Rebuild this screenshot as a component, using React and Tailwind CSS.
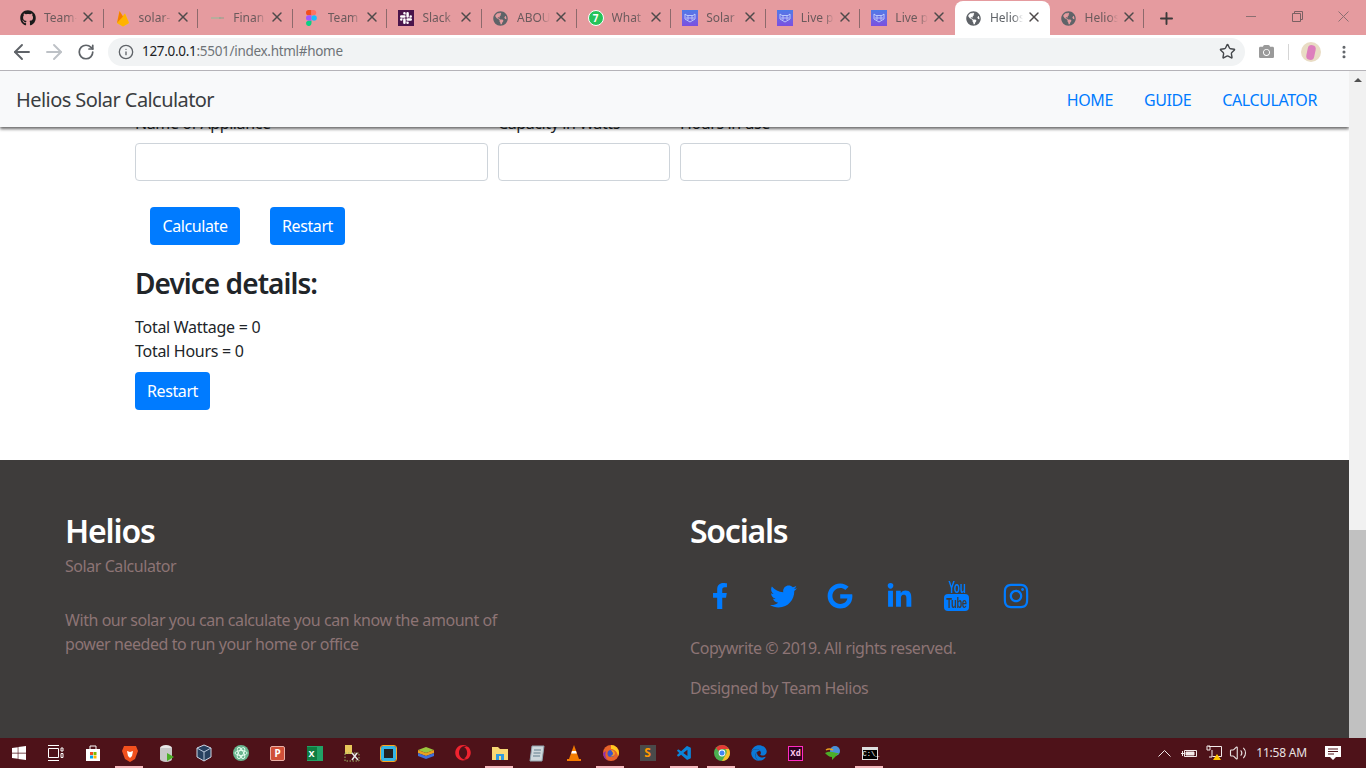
import React from "react";
import { FaGithub, FaGlobeAmericas, FaFacebookF, FaTwitter, FaGoogle, FaLinkedinIn, FaInstagram, FaWindows, FaCamera, FaEdge, FaOpera } from "react-icons/fa";
import { SiSlack } from "react-icons/si";
import { VscVscode } from "react-icons/vsc";
import { X, Plus, ArrowLeft, ArrowRight, RotateCw, Info, Star, Volume2, MoreVertical } from "lucide-react";

const font = "font-['Noto_Sans','Open_Sans',sans-serif]";

function Cat() {
  return (
    <span className="w-4 h-4 bg-gradient-to-b from-[#4d7be8] to-[#7a4fe0] flex items-center justify-center">
      <svg width="12" height="10" viewBox="0 0 12 10" fill="none" stroke="#cfe0ff" strokeWidth="0.8">
        <path d="M1 1l2 1.500h6L11 1v5L6 9 1 6z" />
        <circle cx="4" cy="5" r="1.200" />
        <circle cx="8" cy="5" r="1.200" />
      </svg>
    </span>
  );
}

function Fire() {
  return (
    <svg width="14" height="17" viewBox="0 0 14 17">
      <path d="M1 13L3.500 1 7 6.500 9 3.500 13 13 7 16.500z" fill="#ffca28" />
      <path d="M1 13L9 3.500 13 13 7 16.500z" fill="#ffb300" />
      <path d="M1 13L3.500 1 7 6.500z" fill="#f57c00" />
    </svg>
  );
}

function FigmaIcon() {
  return (
    <svg width="11" height="16" viewBox="0 0 11 16">
      <path d="M0 2.700A2.700 2.700 0 012.700 0h2.800v5.300H2.700A2.700 2.700 0 010 2.700z" fill="#f24e1e" />
      <path d="M5.500 0h2.600a2.700 2.700 0 010 5.300H5.500z" fill="#ff7262" />
      <path d="M0 8a2.700 2.700 0 012.700-2.700h2.800v5.400H2.700A2.700 2.700 0 010 8z" fill="#a259ff" />
      <circle cx="8.100" cy="8" r="2.700" fill="#1abcfe" />
      <path d="M0 13.300a2.700 2.700 0 012.700-2.600h2.800v2.600a2.700 2.700 0 01-5.500 0z" fill="#0acf83" />
    </svg>
  );
}

function SlackIcon() {
  return (
    <span className="w-4 h-4 bg-[#4a154b] flex items-center justify-center">
      <SiSlack className="text-white" size={12} />
    </span>
  );
}

function Finance() {
  return (
    <svg width="16" height="16" viewBox="0 0 16 16">
      <rect x="2" y="7" width="10" height="2" fill="#b8ad9c" />
      <rect x="10" y="7.500" width="5" height="1" fill="#8fa08c" />
    </svg>
  );
}

function Wa() {
  return (
    <span className="relative w-4 h-4 rounded-full bg-[#25c35a] border border-white flex items-center justify-center text-[10px] leading-none font-bold text-white">
      7
    </span>
  );
}

const globe = <FaGlobeAmericas className="text-[#5f6368]" size={15} />;

const tabs = [
  { icon: <FaGithub className="text-[#1a1a1a]" size={16} />, t: "Team-" },
  { icon: <Fire />, t: "solar-" },
  { icon: <Finance />, t: "Finan" },
  { icon: <FigmaIcon />, t: "Team" },
  { icon: <SlackIcon />, t: "Slack" },
  { icon: globe, t: "ABOU" },
  { icon: <Wa />, t: "What" },
  { icon: <Cat />, t: "Solar" },
  { icon: <Cat />, t: "Live p" },
  { icon: <Cat />, t: "Live p" },
  { icon: globe, t: "Helios", active: true },
  { icon: globe, t: "Helios" },
];

function Tab({ icon, t, active, noSep }) {
  return (
    <div className={`relative w-[94.6px] h-[34px] shrink-0 flex items-center pl-[11px] ${active ? "bg-white rounded-t-[8px] text-[#5f6368]" : "text-[#6b5a5c]"}`}>
      <span className="w-4 h-4 flex items-center justify-center shrink-0">{icon}</span>
      <span className="ml-2 w-[33px] overflow-hidden whitespace-nowrap text-[12px] leading-none [mask-image:linear-gradient(90deg,#000_70%,transparent)]">{t}</span>
      <X size={16} strokeWidth={2.2} className="absolute left-[71px] top-[8px] text-[#4f4a4b]" />
      {!noSep && <span className="absolute right-0 top-[8px] w-px h-[19px] bg-[#8d6a6c]" />}
    </div>
  );
}

function TabStrip() {
  return (
    <div className="h-[35px] bg-[#e59b9f] flex items-end pl-[9px] shrink-0">
      <div className="flex h-[34px]">
        {tabs.map((tb, i) => (
          <Tab key={i} {...tb} noSep={tb.active || i === 9} />
        ))}
      </div>
      <div className="h-[34px] w-[44px] flex items-center justify-center">
        <Plus size={19} strokeWidth={2.4} className="text-[#3c3a3b]" />
      </div>
      <div className="ml-auto flex h-[34px] items-start text-[#8b6f71]">
        <div className="w-[46px] h-[30px] flex items-center justify-center"><span className="w-[10px] h-px bg-[#8b6f71]" /></div>
        <div className="w-[46px] h-[30px] flex items-center justify-center">
          <svg width="11" height="11" viewBox="0 0 11 11" fill="none" stroke="#7a6062"><path d="M.5 2.500h8v8h-8zM2.500 2.500v-2h8v8h-2" /></svg>
        </div>
        <div className="w-[46px] h-[30px] flex items-center justify-center">
          <svg width="11" height="11" viewBox="0 0 11 11" stroke="#8b6f71"><path d="M.5.5l10 10M10.500.5l-10 10" /></svg>
        </div>
      </div>
    </div>
  );
}

function Toolbar() {
  return (
    <div className="h-[36px] bg-white border-b border-[#b5b3b8] flex items-center shrink-0 pb-[2px]">
      <div className="w-[108px] flex items-center shrink-0 pl-[10px] gap-[8px]">
        <ArrowLeft size={24} strokeWidth={1.9} className="text-[#5f6368]" />
        <ArrowRight size={24} strokeWidth={1.9} className="text-[#bdc1c6]" />
        <span className="w-6 flex justify-center"><RotateCw size={18} strokeWidth={2.3} className="text-[#5f6368]" /></span>
      </div>
      <div className="w-[1137px] h-[28px] rounded-full bg-[#f1f3f4] flex items-center pl-[10px] pr-[9px] shrink-0">
        <Info size={16} strokeWidth={2} className="text-[#5f6368] shrink-0" />
        <span className="ml-[8px] text-[13.5px] text-[#6f7378] tracking-[-0.3px]"><span className="text-[#202124]">127.0.0.1</span>:5501/index.html#home</span>
        <Star size={17} strokeWidth={2} className="ml-auto text-[#45484c]" />
      </div>
      <FaCamera size={15} className="text-[#9a9a9a] ml-[14px]" />
      <span className="w-px h-[16px] bg-[#d5d5d5] ml-[14px]" />
      <span className="relative ml-[12px] w-5 h-5 rounded-full bg-[#e9dcc4] overflow-hidden">
        <span className="absolute left-[6px] top-[3px] w-[8px] h-[15px] rounded-[4px] bg-[#dd7fbd] rotate-12" />
      </span>
      <MoreVertical size={16} strokeWidth={2.6} className="ml-[15px] text-[#5f6368]" />
    </div>
  );
}

function Nav() {
  return (
    <nav className="relative z-10 h-[56px] pt-[2px] bg-[#f8f9fa] shadow-[0_2px_3px_rgba(0,0,0,0.6)] flex items-center justify-between pl-4 pr-[32px] shrink-0">
      <span className="text-[20px] text-[#3a3d41] tracking-[-0.57px]">Helios Solar Calculator</span>
      <div className="flex gap-[31px] text-[16px] text-[#007bff] tracking-[-0.4px]">
        <span>HOME</span>
        <span>GUIDE</span>
        <span>CALCULATOR</span>
      </div>
    </nav>
  );
}

function Field({ label, w }) {
  return (
    <div className={`flex flex-col ${w}`}>
      <label className="h-6 mb-2 text-[16px] leading-6 text-[#212529] tracking-[-0.4px] whitespace-nowrap">{label}</label>
      <input className="h-[38px] w-full border border-[#ced4da] rounded bg-white" />
    </div>
  );
}

function Btn({ children, w }) {
  return <button className={`h-[38px] ${w} rounded bg-[#007bff] text-white text-[16px] tracking-[-0.4px] flex items-center justify-center`}>{children}</button>;
}

function Main() {
  return (
    <main className="bg-white pl-[135px] -mt-[16px] h-[349px] shrink-0">
      <div className="flex gap-[10px]">
        <Field label="Name of Appliance" w="w-[353px]" />
        <Field label="Capacity in Watts" w="w-[172px]" />
        <Field label="Hours in use" w="w-[171px]" />
      </div>
      <div className="flex gap-[30px] pl-[15px] mt-[26px]">
        <Btn w="w-[90px]">Calculate</Btn>
        <Btn w="w-[75px]">Restart</Btn>
      </div>
      <h3 className="mt-[19px] text-[28px] leading-[38px] font-semibold text-[#212529] tracking-[-0.95px]">Device details:</h3>
      <div className="mt-[13px] text-[16px] leading-6 text-[#212529] tracking-[-0.28px]">
        <p>Total Wattage = 0</p>
        <p>Total Hours = 0</p>
      </div>
      <div className="mt-[9px]"><Btn w="w-[75px]">Restart</Btn></div>
    </main>
  );
}

function YouTubeStack() {
  return (
    <span className="w-[25px] h-[30px] flex flex-col items-center text-[#007bff] font-['Liberation_Sans',sans-serif]">
      <span className="h-[13px] text-[16px] leading-[13px] font-bold scale-x-[0.62] whitespace-nowrap">You</span>
      <span className="w-[25px] h-[17px] rounded-[4px] bg-[#007bff] text-[#3e3c3b] flex items-center justify-center overflow-hidden">
        <span className="text-[15px] leading-[17px] font-bold scale-x-[0.62] whitespace-nowrap">Tube</span>
      </span>
    </span>
  );
}

function Footer() {
  const muted = "text-[#8d7475]";
  return (
    <footer className="h-[279px] bg-[#3e3c3b] flex shrink-0 tracking-[-0.44px]">
      <div className="w-[625px] pl-[65px] pt-[50px]">
        <h2 className="text-[32px] leading-[42px] font-semibold text-white tracking-[-1.15px]">Helios</h2>
        <p className={`mt-[2px] text-[16px] leading-6 ${muted}`}>Solar Calculator</p>
        <p className={`mt-[30px] w-[450px] text-[16px] leading-6 ${muted}`}>With our solar you can calculate you can know the amount of power needed to run your home or office</p>
      </div>
      <div className="pl-[65px] pt-[50px]">
        <h2 className="text-[32px] leading-[42px] font-semibold text-white tracking-[-1.25px]">Socials</h2>
        <div className="mt-[29px] h-[30px] flex items-center text-[#007bff]">
          <span className="w-[80px] pl-[17px]"><FaFacebookF size={26} /></span>
          <span className="w-[57px]"><FaTwitter size={27} /></span>
          <span className="w-[59px]"><FaGoogle size={26} /></span>
          <span className="w-[58px]"><FaLinkedinIn size={27} /></span>
          <span className="w-[58px]"><YouTubeStack /></span>
          <span><FaInstagram size={28} /></span>
        </div>
        <p className={`mt-[25px] text-[16px] leading-6 ${muted}`}>Copywrite © 2019. All rights reserved.</p>
        <p className={`mt-4 text-[16px] leading-6 ${muted}`}>Designed by Team Helios</p>
      </div>
    </footer>
  );
}

function Scrollbar() {
  return (
    <div className="w-[17px] bg-[#f1f1f1] flex flex-col shrink-0">
      <div className="h-[17px] flex items-center justify-center">
        <span className="w-0 h-0 border-x-[4px] border-x-transparent border-b-[4px] border-b-[#505050]" />
      </div>
      <div className="flex-1" />
      <div className="h-[208px] bg-[#c1c1c1]" />
    </div>
  );
}

const T = ({ children }) => <svg width="20" height="20" viewBox="0 0 20 20">{children}</svg>;

const chrome = (
  <svg width="16" height="16" viewBox="0 0 16 16">
    <circle cx="8" cy="8" r="8" fill="#4caf50" />
    <path d="M8 0a8 8 0 016.900 4H8a4 4 0 00-3.500 2L2 2.800A8 8 0 018 0z" fill="#e53935" />
    <path d="M14.900 4A8 8 0 018 16l3.500-6a4 4 0 00-.2-6z" fill="#fbc02d" />
    <circle cx="8" cy="8" r="3.400" fill="#fff" />
    <circle cx="8" cy="8" r="2.500" fill="#4285f4" />
  </svg>
);

const firefox = (
  <svg width="16" height="16" viewBox="0 0 16 16">
    <circle cx="8" cy="8" r="8" fill="#e8622a" />
    <path d="M8 0a8 8 0 018 8c0 2-1 3-1 3-1-5-4-7-7-7z" fill="#ffc81f" />
    <path d="M0 8a8 8 0 005 7.400C2 13 2 9 3 6z" fill="#8f2fa8" />
    <circle cx="8" cy="8.500" r="3.500" fill="#3a55c8" />
    <path d="M8 5c3 0 4 2 4 4-1 2-3 3-5 2 2 0 3-1 3-3z" fill="#ff9a1f" />
  </svg>
);

const taskIcons = [
  { i: <FaWindows size={16} className="text-white" /> },
  { i: <svg width="17" height="16" viewBox="0 0 17 16" fill="none" stroke="#fff"><path d="M1.500 3.500h10v9h-10zM1 .5h11M1 15.500h11M14 3h2v3h-2zM14 8.500h2v4h-2z" /></svg> },
  { i: <T><path d="M3 6h14v12H3z" fill="#fff" /><path d="M7 6V3h6v3" fill="none" stroke="#fff" /><path d="M7 9h3v3H7z" fill="#f25022" /><path d="M10.500 9h3v3h-3z" fill="#7fba00" /><path d="M7 12.500h3v3H7z" fill="#00a4ef" /><path d="M10.500 12.500h3v3h-3z" fill="#ffb900" /></T> },
  { i: <T><path d="M4 3h12l2 5-3 8-5 3-5-3-3-8z" fill="#f1501e" /><path d="M7 8l3 1 3-1-1 5-2 2-2-2z" fill="#fff" /></T>, on: true },
  { i: <T><ellipse cx="9" cy="5" rx="6" ry="3" fill="#e8e8e8" /><path d="M3 5h12v11a6 3 0 01-12 0z" fill="#c8c8c8" /><path d="M10 10l7 4-7 4z" fill="#4caf28" /></T> },
  { i: <T><path d="M10 2l7 3v9l-7 4-7-4V5z" fill="#27405f" stroke="#cfd8e6" /><path d="M3 5l7 4 7-4M10 9v9" stroke="#b8c6da" fill="none" /></T> },
  { i: <T><circle cx="10" cy="10" r="8" fill="#68b58e" /><g fill="none" stroke="#e8fff2" strokeWidth="0.9"><ellipse cx="10" cy="10" rx="6" ry="2.500" /><ellipse cx="10" cy="10" rx="6" ry="2.500" transform="rotate(60 10 10)" /><ellipse cx="10" cy="10" rx="6" ry="2.500" transform="rotate(120 10 10)" /></g></T> },
  { i: <span className="w-[15px] h-[15px] rounded-[2px] bg-[#d04f38] border border-[#e8b0a6] flex items-center justify-center text-[10px] font-bold text-white leading-none">P</span> },
  { i: <span className="relative w-[16px] h-[15px] bg-[#21a366]"><span className="absolute left-0 top-[1px] w-[10px] h-[13px] bg-[#107c41] flex items-center justify-center text-[9px] font-bold text-white leading-none">X</span></span> },
  { i: <T><rect x="3" y="2" width="7" height="9" fill="#e8c85a" /><rect x="3" y="10" width="14" height="8" fill="none" stroke="#9fb86a" strokeDasharray="1.500 1.500" /><path d="M10 10l6 7M15 10l-5 7" stroke="#e8e8e8" strokeWidth="1.500" /></T> },
  { i: <span className="w-[15px] h-[15px] border-[3px] border-[#33b5e5] rounded-[2px] bg-[#222] outline-1 outline-[#f6a623]" /> },
  { i: <T><path d="M10 4l8 3-8 3-8-3z" fill="#9bc53d" /><path d="M2 7v3l8 3 8-3V7l-8 3z" fill="#e8a020" /><path d="M2 10v3l8 3 8-3v-3l-8 3z" fill="#3f6fd8" /></T> },
  { i: <FaOpera size={16} className="text-[#f0232f]" /> },
  { i: <T><path d="M2 4h6l2 2h8v11H2z" fill="#f8d775" /><path d="M6 11h8v6H6z" fill="#2f9ae0" /><path d="M9 13h2v4H9z" fill="#f8d775" /></T>, on: true },
  { i: <T><path d="M5 3h12l-2 15H3z" fill="#cfd8dc" stroke="#90a4ae" /><path d="M7 7h7M6.500 10h7M6 13h7" stroke="#607d8b" /></T> },
  { i: <T><path d="M10 2l5 14H5z" fill="#f57c00" /><path d="M8 8h4l.8 2.500H7.200z" fill="#fff" /><rect x="3" y="16" width="14" height="2" fill="#f57c00" /></T> },
  { i: firefox, on: true },
  { i: <span className="w-4 h-4 bg-[#4a4a4a] flex items-center justify-center text-[#ff9800] text-[12px] font-bold leading-none">S</span> },
  { i: <VscVscode size={17} className="text-[#0a84d8]" />, on: true },
  { i: chrome, on: true },
  { i: <FaEdge size={16} className="text-[#0b78d7]" /> },
  { i: <span className="w-[15px] h-[15px] bg-[#2e001f] border border-[#ff2bc2] flex items-center justify-center text-[8px] font-bold text-[#ffc6ee] leading-none">Xd</span> },
  { i: <T><circle cx="12" cy="8" r="5" fill="#4a90d9" /><path d="M2 10c5-3 10 0 14 0l-7 7v-3c-3 0-5-2-7-4z" fill="#4caf28" /><path d="M3 7c3-2 5-1 7 0" stroke="#e8a020" fill="none" strokeWidth="1.500" /></T> },
  { i: <span className="w-4 h-[13px] bg-black border border-[#ddd] border-t-[3px] text-[7px] leading-[8px] text-white font-['Liberation_Mono',monospace]">C:\_</span>, on: true },
];

function Taskbar() {
  return (
    <div className="h-[30px] bg-[#4e1219] flex items-center shrink-0">
      {taskIcons.map((k, n) => (
        <div key={n} className="relative w-[37px] h-[30px] flex items-center justify-center shrink-0">
          {k.i}
          {k.on && <span className="absolute bottom-0 left-[4px] right-[5px] h-[2px] bg-[#f4b8bc]" />}
        </div>
      ))}
      <div className="ml-auto flex items-center text-[#e9e2e2] h-[30px]">
        <svg width="13" height="8" viewBox="0 0 13 8" fill="none" stroke="#f2eaea" className="mr-[10px]"><path d="M.5 7.500l6-6 6 6" /></svg>
        <svg width="16" height="12" viewBox="0 0 16 12" fill="none" stroke="#f2eaea" className="mr-[9px]"><path d="M3.500 3.500h12v6h-12z" /><path d="M5 5h8v3H5z" fill="#f2eaea" /><path d="M0 6.500h3M1.500 4v5" /></svg>
        <svg width="17" height="16" viewBox="0 0 17 16" fill="none" stroke="#f2eaea" className="mr-[6px]"><path d="M2.500 1.500h13v10h-9M1 1h3v4H1zM6 5v7h-3" /><path d="M11 9l4 6H7z" fill="#ffc400" stroke="none" /></svg>
        <Volume2 size={18} strokeWidth={1.5} className="mr-[9px]" />
        <span className="text-[12px] tracking-[-0.2px] text-[#e9e2e2]">11:58 AM</span>
        <svg width="16" height="16" viewBox="0 0 16 16" className="ml-[18px] mr-[25px]"><path d="M0 1h16v11h-5l-3 3-3-3H0z" fill="#fff" /><path d="M3 4h10M3 6.500h10M3 9h6" stroke="#4e1219" /></svg>
      </div>
    </div>
  );
}

export default function App() {
  return (
    <div className={`w-[1366px] h-[768px] overflow-hidden flex flex-col ${font}`}>
      <TabStrip />
      <Toolbar />
      <div className="flex flex-1 min-h-0 overflow-hidden">
        <div className="flex-1 flex flex-col min-w-0 overflow-hidden">
          <Nav />
          <Main />
          <Footer />
        </div>
        <Scrollbar />
      </div>
      <Taskbar />
    </div>
  );
}
